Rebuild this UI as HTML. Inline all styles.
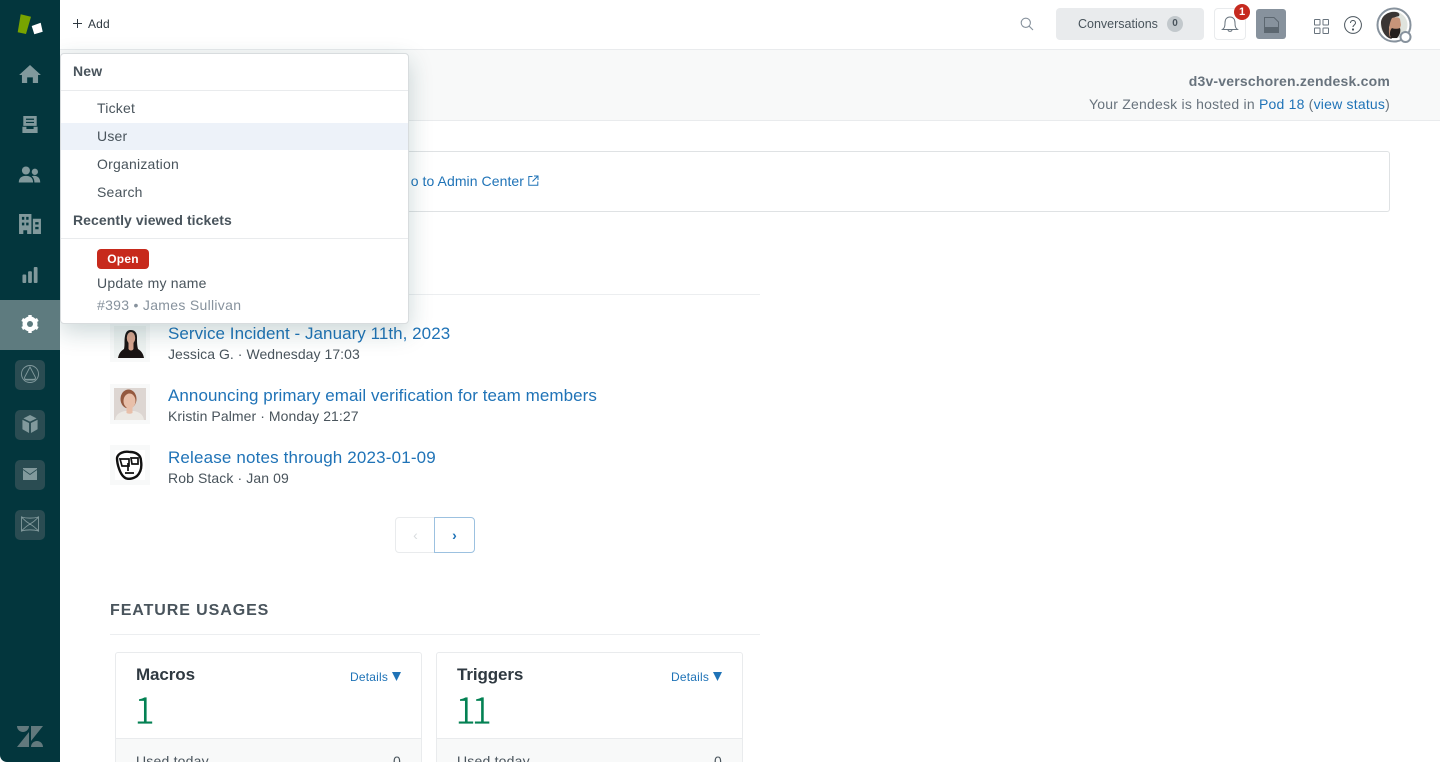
<!DOCTYPE html>
<html><head><meta charset="utf-8"><title>Zendesk Admin</title>
<style>
*{box-sizing:border-box}
html,body{margin:0;padding:0;width:1440px;height:762px;overflow:hidden;background:#fff;font-family:"Liberation Sans",sans-serif;color:#49545c}
#p{position:relative;width:1440px;height:762px;overflow:hidden;background:#fff}
.t{position:absolute;white-space:nowrap;line-height:20px}
.a{position:absolute}
.l{color:#1f73b7}
.sq{position:absolute;left:15px;width:30px;height:30px;border-radius:5px;background:#2a4c52}
.n{position:absolute;white-space:nowrap;font-family:"Noto Sans CJK JP","Liberation Sans",sans-serif;font-size:38px;line-height:40px;color:#038153;letter-spacing:-5px;-webkit-text-stroke:.8px #fff}
svg{position:absolute;display:block}
</style></head><body><div id="p">

<!-- content -->
<div class="a" style="left:60px;top:50px;width:1380px;height:71px;background:#f8f9f9;border-bottom:1px solid #e9ebed"></div>
<div class="t" style="right:50px;top:71px;font-size:14px;font-weight:bold;color:#68737d;letter-spacing:.2px">d3v-verschoren.zendesk.com</div>
<div class="t" style="right:50px;top:94px;font-size:14px;color:#68737d;letter-spacing:.21px">Your Zendesk is hosted in <span class="l">Pod 18</span> (<span class="l">view status</span>)</div>

<div class="a" style="left:60px;top:151px;width:1330px;height:61px;border:1px solid #dfe2e4;border-left:0;border-radius:0 3px 3px 0"></div>
<div class="t l" style="right:916px;top:171px;font-size:14px;letter-spacing:.07px">o to Admin Center</div>
<svg style="left:528px;top:175px" width="11" height="11" viewBox="0 0 11 11" fill="none" stroke="#1f73b7"><path d="M4.500 1.500H.8v8.700h9V6.500M6 1h4v4M10 1 4.500 6.500"/></svg>

<div class="a" style="left:110px;top:294px;width:650px;height:1px;background:#eceef0"></div>

<div class="a" style="left:110px;top:322px;width:40px;height:40px;background:#f8f9f9"></div>
<div class="a" style="left:114px;top:326px;width:32px;height:32px;background:#eef2f1;overflow:hidden">
<svg style="left:0;top:0" width="32" height="32" viewBox="0 0 32 32"><path d="M4 32c1-5 3-7 6-9 1-5 0-8 1-13 1-5 3-6 6-6s6 2 6 7c0 5 0 8 1 12 3 2 5 4 6 9z" fill="#1a1414"/><ellipse cx="17" cy="12" rx="4.200" ry="6" fill="#d8a48e"/><path d="M14.500 17h5v6c-1 2-4 2-5 0z" fill="#d8a48e"/></svg></div>
<div class="t l" style="left:168px;top:324px;font-size:17px;letter-spacing:.05px">Service Incident - January 11th, 2023</div>
<div class="t" style="left:168px;top:344px;font-size:14px;letter-spacing:.05px">Jessica G. · Wednesday 17:03</div>

<div class="a" style="left:110px;top:384px;width:40px;height:40px;background:#f8f9f9"></div>
<div class="a" style="left:114px;top:388px;width:32px;height:32px;background:#ddd6d2;overflow:hidden">
<svg style="left:0;top:0" width="32" height="32" viewBox="0 0 32 32"><path d="M1 32c1-6 5-8 10-9h9c5 1 9 3 10 9z" fill="#ece9e4"/><ellipse cx="14.500" cy="11" rx="8" ry="9.500" fill="#94593f"/><ellipse cx="15.500" cy="13" rx="6" ry="7.500" fill="#e8bfa9"/><path d="M12.500 19h6v6c-2 1-4 1-6 0z" fill="#e8bfa9"/></svg></div>
<div class="t l" style="left:168px;top:386px;font-size:17px;letter-spacing:.07px">Announcing primary email verification for team members</div>
<div class="t" style="left:168px;top:406px;font-size:14px;letter-spacing:.08px">Kristin Palmer · Monday 21:27</div>

<div class="a" style="left:110px;top:445px;width:40px;height:40px;background:#f8f9f9"></div>
<div class="a" style="left:115px;top:450px;width:30px;height:30px;background:#fff"></div>
<svg style="left:114px;top:449px" width="32" height="32" viewBox="0 0 32 32" fill="none" stroke="#111" stroke-width="2.400"><path d="M3 9c1-5 7-7 13-6 6 0 11 3 11 9 1 6 0 11-4 15-4 3-10 4-13 1C6 25 3 15 3 9z"/><path d="M6 10h9v7H8zM17 9h7v6h-6zM14 14v8M11 24h9" stroke-width="1.700"/></svg>
<div class="t l" style="left:168px;top:448px;font-size:17px;letter-spacing:.16px">Release notes through 2023-01-09</div>
<div class="t" style="left:168px;top:468px;font-size:14px;letter-spacing:.1px">Rob Stack · Jan 09</div>

<div class="a" style="left:395px;top:517px;width:41px;height:36px;border:1px solid #e9ebed;border-radius:4px 0 0 4px"></div>
<div class="t" style="left:395px;top:525px;width:41px;text-align:center;font-size:14px;color:#d8dcde">‹</div>
<div class="a" style="left:434px;top:517px;width:41px;height:36px;border:1.500px solid #9cc1e0;border-radius:0 4px 4px 0;background:#fff"></div>
<div class="t l" style="left:434px;top:525px;width:41px;text-align:center;font-size:14px;font-weight:bold">›</div>

<div class="t" style="left:110px;top:601px;font-size:16px;font-weight:bold;letter-spacing:.92px;color:#49545c">FEATURE USAGES</div>
<div class="a" style="left:110px;top:634px;width:650px;height:1px;background:#eceef0"></div>

<div class="a" style="left:115px;top:652px;width:307px;height:130px;border:1px solid #e9ebed;border-radius:3px;overflow:hidden"><div class="a" style="left:0;right:0;top:85px;height:50px;background:#f8f9f9;border-top:1px solid #e9ebed"></div></div>
<div class="t" style="left:136px;top:665px;font-size:17px;font-weight:bold;color:#2f3941;letter-spacing:-.1px">Macros</div>
<div class="t l" style="left:350px;top:667px;font-size:12px;letter-spacing:.2px">Details</div>
<svg style="left:392px;top:672px" width="9" height="9" viewBox="0 0 9 9"><path d="M0 0h9L4.500 9z" fill="#1f73b7"/></svg>
<div class="n" style="left:134px;top:688px">1</div>
<div class="t" style="left:136px;top:751px;font-size:14px;color:#49545c;letter-spacing:.2px">Used today</div>
<div class="t" style="left:393px;top:751px;font-size:14px;color:#49545c">0</div>

<div class="a" style="left:436px;top:652px;width:307px;height:130px;border:1px solid #e9ebed;border-radius:3px;overflow:hidden"><div class="a" style="left:0;right:0;top:85px;height:50px;background:#f8f9f9;border-top:1px solid #e9ebed"></div></div>
<div class="t" style="left:457px;top:665px;font-size:17px;font-weight:bold;color:#2f3941;letter-spacing:-.1px">Triggers</div>
<div class="t l" style="left:671px;top:667px;font-size:12px;letter-spacing:.2px">Details</div>
<svg style="left:713px;top:672px" width="9" height="9" viewBox="0 0 9 9"><path d="M0 0h9L4.500 9z" fill="#1f73b7"/></svg>
<div class="n" style="left:455px;top:688px">11</div>
<div class="t" style="left:457px;top:751px;font-size:14px;color:#49545c;letter-spacing:.2px">Used today</div>
<div class="t" style="left:714px;top:751px;font-size:14px;color:#49545c">0</div>

<!-- top bar -->
<div class="a" style="left:60px;top:0;width:1380px;height:50px;background:#fff;border-bottom:1px solid #e9ebed"></div>
<svg style="left:73px;top:19px" width="9" height="9" viewBox="0 0 9 9" stroke="#2f3941" stroke-width="1"><path d="M4.500 0v9M0 4.500h9"/></svg>
<div class="t" style="left:88px;top:14px;font-size:12px;color:#2f3941;letter-spacing:.15px">Add</div>

<svg style="left:1020px;top:17px" width="14" height="14" viewBox="0 0 14 14" fill="none" stroke="#87929d" stroke-width="1.100"><circle cx="5.800" cy="5.800" r="4.600"/><path d="M9.200 9.200 13 13"/></svg>
<div class="a" style="left:1056px;top:8px;width:148px;height:32px;background:#e9ebed;border-radius:4px"></div>
<div class="t" style="left:1078px;top:14px;font-size:12.500px;color:#49545c">Conversations</div>
<div class="a" style="left:1167px;top:16px;width:16px;height:16px;border-radius:8px;background:#c2c8cc;text-align:center;font-size:10px;line-height:16px;font-weight:bold;color:#49545c">0</div>
<div class="a" style="left:1214px;top:8px;width:32px;height:32px;border:1px solid #e9ebed;border-radius:4px;background:#fff"></div>
<svg style="left:1221px;top:15px" width="18" height="18" viewBox="0 0 18 18" fill="none" stroke="#68737d" stroke-width="1"><path d="M1.500 14.500c2-1.500 2.500-3 2.500-6.500C4 4 6 2 9 2s5 2 5 6c0 3.500.5 5 2.500 6.500zM7 14.500c0 2.500 4 2.500 4 0"/></svg>
<div class="a" style="left:1234px;top:4px;width:16px;height:16px;border-radius:8px;background:#c62a1f;color:#fff;text-align:center;font-size:11px;line-height:16px;font-weight:bold">1</div>
<div class="a" style="left:1256px;top:9px;width:30px;height:30px;border-radius:3px;background:#87929d"></div>
<svg style="left:1264px;top:17px" width="15" height="16" viewBox="0 0 15 16"><path d="M.5.500H10L14.500 5V15.500H.5z" fill="none" stroke="#5c6770"/><path d="M0 10h15v6H0z" fill="#5c6770"/></svg>
<svg style="left:1314px;top:19px" width="15" height="15" viewBox="0 0 15 15" fill="none" stroke="#68737d"><rect x=".5" y=".5" width="5.500" height="5.500" rx=".5"/><rect x="9" y=".5" width="5.500" height="5.500" rx=".5"/><rect x=".5" y="9" width="5.500" height="5.500" rx=".5"/><rect x="9" y="9" width="5.500" height="5.500" rx=".5"/></svg>
<svg style="left:1344px;top:16px" width="18" height="18" viewBox="0 0 18 18" fill="none" stroke="#49545c"><circle cx="9" cy="9" r="8.400"/><path d="M6.500 7c0-3.300 5-3.300 5 0 0 2-2.500 2-2.500 4"/><circle cx="9" cy="13.500" r=".6" fill="#49545c"/></svg>
<svg style="left:1376px;top:7px" width="38" height="38" viewBox="0 0 38 38"><circle cx="18" cy="18" r="16.500" fill="#fff" stroke="#87929d" stroke-width="2"/><circle cx="18" cy="18" r="13.500" fill="#dfe3dd"/><path d="M5 15c1-7 8-11 15-10 3 .5 4 2 3 4-3 1-5 1-6 3l-1 6c-2 0-3 1-3 3 0 4 1 8 3 11-7-1-11-9-11-17z" fill="#3a3533"/><path d="M16 11c3-1 7-1 8 1l1 6-1 3-7 9h-3c-2-4-1-12 1-17z" fill="#c79479"/><path d="M15 31c-2-4-1-8 1-10 2 1 6 1 8 0 1 3 0 7-3 10z" fill="#231f1d"/><circle cx="29.500" cy="30" r="5" fill="#fff" stroke="#87929d" stroke-width="2"/></svg>

<!-- dropdown -->
<div class="a" style="left:60px;top:53px;width:349px;height:271px;background:#fff;border:1px solid #d8dcde;border-radius:4px;box-shadow:0 8px 24px rgba(23,73,77,.22)"></div>
<div class="t" style="left:73px;top:61px;font-size:14px;font-weight:bold;color:#49545c;letter-spacing:.2px">New</div>
<div class="a" style="left:61px;top:90px;width:347px;height:1px;background:#e9ebed"></div>
<div class="t" style="left:97px;top:98px;font-size:14px;letter-spacing:.22px">Ticket</div>
<div class="a" style="left:61px;top:123px;width:347px;height:27px;background:#edf2f9"></div>
<div class="t" style="left:97px;top:126px;font-size:14px;letter-spacing:.22px">User</div>
<div class="t" style="left:97px;top:154px;font-size:14px;letter-spacing:.22px">Organization</div>
<div class="t" style="left:97px;top:182px;font-size:14px;letter-spacing:.22px">Search</div>
<div class="t" style="left:73px;top:210px;font-size:14px;font-weight:bold;letter-spacing:.07px">Recently viewed tickets</div>
<div class="a" style="left:61px;top:238px;width:347px;height:1px;background:#e9ebed"></div>
<div class="a" style="left:97px;top:249px;width:52px;height:20px;background:#c72a1c;border-radius:4px;color:#fff;text-align:center;font-size:12px;font-weight:bold;line-height:20px;letter-spacing:.2px">Open</div>
<div class="t" style="left:97px;top:273px;font-size:14px;letter-spacing:.22px">Update my name</div>
<div class="t" style="left:97px;top:295px;font-size:14px;color:#87929d;letter-spacing:.3px">#393 • James Sullivan</div>

<!-- sidebar -->
<div class="a" style="left:0;top:0;width:60px;height:762px;background:#03363d;border-radius:0 0 0 7px"></div>
<div class="a" style="left:0;top:300px;width:60px;height:50px;background:#5e7b7f"></div>
<svg style="left:0;top:0" width="60" height="50" viewBox="0 0 60 50"><path d="M20.700 14.300 31 16.700 26 34 17.700 32.300z" fill="#78a300"/><path d="M31.700 26 40.700 22.700 42.700 31.700 34.300 34.300z" fill="#fff"/></svg>
<svg style="left:19px;top:65px" width="22" height="18" viewBox="0 0 23 19" fill="#81999c"><path d="M11.500 0 23 10.500h-3V19h-5.500v-6h-6v6H3v-8.500H0z"/></svg>
<svg style="left:22px;top:116px" width="16" height="17" viewBox="0 0 17 19" fill="#81999c"><path d="M1 0h15v11H1zM0 12h4.500v2.500h8V12H17v7H0z"/><path d="M4 3h9v1.300H4zM4 6.500h9v1.300H4z" fill="#03363d"/></svg>
<svg style="left:18px;top:166px" width="23" height="17" viewBox="0 0 24 19" fill="#81999c"><circle cx="8" cy="5" r="4.500"/><path d="M0 18.500c0-5 3-7.500 8-7.500s8 2.500 8 7.500z"/><circle cx="18" cy="6.500" r="3.500"/><path d="M17.500 18.500c0-3-1-5.500-3-7 3-1.500 9.500-.5 9.500 7z"/></svg>
<svg style="left:19px;top:214px" width="22" height="20" viewBox="0 0 23 21" fill="#81999c"><path d="M0 0h13v21H8.500v-4h-4v4H0zM14.500 5H23v16H14.500z"/><path d="M3 3h2.500v3H3zM7.500 3H10v3H7.500zM3 9h2.500v3H3zM7.500 9H10v3H7.500zM17 8.500h3.500v2.500H17zM17 13.500h3.500V16H17z" fill="#03363d"/></svg>
<svg style="left:22px;top:267px" width="16" height="16" viewBox="0 0 16 17" fill="#81999c"><rect x="0" y="8" width="4" height="9" rx="1"/><rect x="6" y="4.500" width="4" height="12.500" rx="1"/><rect x="12" y="0" width="4" height="17" rx="1"/></svg>
<svg style="left:21px;top:315px" width="18" height="18" viewBox="0 0 18 18"><circle cx="9" cy="9" r="5.500" fill="none" stroke="#fff" stroke-width="4"/><path d="M9 9 9 0M9 9 9 18M9 9 1.200 4.500M9 9 16.800 13.500M9 9 1.200 13.500M9 9 16.800 4.500" stroke="#fff" stroke-width="3.400"/><circle cx="9" cy="9" r="3" fill="#5e7b7f"/></svg>

<div class="sq" style="top:359.500px"></div>
<svg style="left:21px;top:365px" width="18" height="18" viewBox="0 0 18 18" fill="none" stroke="#81999c" stroke-width=".9"><circle cx="9" cy="9" r="8.500"/><path d="M9 2 3.500 12.500c0 1.800 1 2.500 3 2.500h5c2 0 3-.7 3-2.500z"/><path d="M3.500 14.500h11" stroke-width="1.300"/></svg>
<div class="sq" style="top:409.500px"></div>
<svg style="left:22px;top:415px" width="16" height="18" viewBox="0 0 16 19" fill="#81999c"><path d="M8 0 15 3.500 8 7 1 3.500zM0 5l7 3.500V19L0 15zM16 5 9 8.500V19l7-4z"/></svg>
<div class="sq" style="top:459.500px"></div>
<svg style="left:23px;top:468px" width="14" height="12" viewBox="0 0 14 12" fill="#81999c"><path d="M0 0h14v12H0z"/><path d="M0 1.500 7 6.500 14 1.500" fill="none" stroke="#2a4c52" stroke-width=".9"/></svg>
<div class="sq" style="top:509.500px"></div>
<svg style="left:21px;top:516px" width="18" height="16" viewBox="0 0 18 16" fill="none" stroke="#81999c" stroke-width=".9"><path d="M.5 1c2 2 4 4.500 8.500 7C4.500 10.500 2.500 13 .5 15zM17.500 1c-2 2-4 4.500-8.500 7 4.500 2.500 6.500 5 8.500 7zM.5 1c5 1.500 12 1.500 17 0M.5 15c5-1.500 12-1.500 17 0"/></svg>
<svg style="left:17px;top:726px" width="26" height="21" viewBox="0 0 26 21" fill="#62797d"><path d="M0 0h12C12 3.300 9.300 6 6 6S0 3.300 0 0zM12 6v15H0zM14 0v15L26 0zM14 21c0-3.300 2.700-6 6-6s6 2.700 6 6z"/></svg>
</div></body></html>
